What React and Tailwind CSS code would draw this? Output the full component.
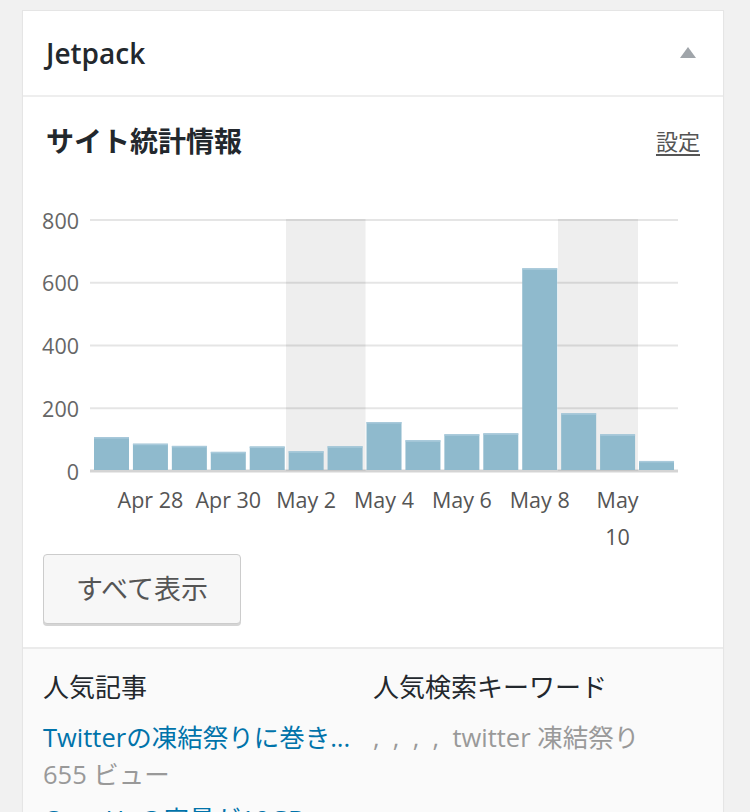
const bars = [108, 87, 80, 61, 78, 63, 79, 156, 98, 117, 120, 646, 184, 117, 32];
const xLabels = [
  { i: 1, t: "Apr 28" },
  { i: 3, t: "Apr 30" },
  { i: 5, t: "May 2" },
  { i: 7, t: "May 4" },
  { i: 9, t: "May 6" },
  { i: 11, t: "May 8" },
];
const yTicks = [0, 200, 400, 600, 800];

function Chart() {
  const zero = 472;
  const unit = 62.75 / 200;
  const step = 38.93;
  const x0 = 94;
  return (
    <svg width="700" height="350" viewBox="23 200 700 350" className="block">
      {/* weekend shading */}
      <rect x="286" y="220" width="79.5" height="252" fill="#eeeeee" />
      <rect x="558" y="220" width="80" height="252" fill="#eeeeee" />
      {yTicks.map((v) => {
        const y = zero - v * unit;
        return (
          <g key={v}>
            <line
              x1="90"
              x2="678"
              y1={y}
              y2={y}
              stroke={v === 0 ? "rgba(0,0,0,0.17)" : "rgba(0,0,0,0.1)"}
              strokeWidth={v === 0 ? 3 : 2}
            />
            <text x="79" y={y} textAnchor="end" dominantBaseline="central" fontSize="21.5" fill="#666">
              {v}
            </text>
          </g>
        );
      })}
      {bars.map((v, i) => {
        const h = v * unit;
        const x = x0 + i * step;
        return (
          <g key={i}>
            <rect x={x} y={zero - h} width="35" height={h - 1} fill="#8fbacd" />
            <rect x={x} y={zero - h} width="35" height="1.5" fill="#a9cadb" />
          </g>
        );
      })}
      {xLabels.map((l) => (
        <text
          key={l.t}
          x={x0 + l.i * step + 17.5}
          y="500"
          textAnchor="middle"
          dominantBaseline="central"
          fontSize="21.5"
          fill="#555"
        >
          {l.t}
        </text>
      ))}
      <text x={x0 + 13 * step + 17.5} y="500" textAnchor="middle" dominantBaseline="central" fontSize="21.5" fill="#555">
        May
      </text>
      <text x={x0 + 13 * step + 17.5} y="537" textAnchor="middle" dominantBaseline="central" fontSize="21.5" fill="#555">
        10
      </text>
    </svg>
  );
}

export default function App() {
  return (
    <div
      className="min-h-screen h-[812px] overflow-hidden bg-[#f1f1f1] pt-[10px]"
      style={{ fontFamily: '"Open Sans", "Noto Sans CJK JP", sans-serif' }}
    >
      <div className="ml-[22px] w-[702px] bg-white border border-[#e5e5e5] shadow-[0_1px_1px_rgba(0,0,0,0.04)]">
        {/* header */}
        <div className="flex items-center justify-between h-[86px] pl-[23px] pr-[27px] border-b-2 border-[#eeeeee]">
          <h2 className="text-[28px] font-semibold text-[#23282d]">Jetpack</h2>
          <svg width="16" height="11" viewBox="0 0 16 11" className="mb-[1px]">
            <polygon points="8,0 16,11 0,11" fill="#a0a5aa" />
          </svg>
        </div>

        {/* stats */}
        <div className="pt-[26px] pb-[23px]">
          <div className="flex items-center justify-between pl-[23px] pr-[23px] h-[36px]">
            <h3 className="text-[28px] font-bold text-[#23282d] leading-[36px]">サイト統計情報</h3>
            <a href="#" className="text-[22px] text-[#555] underline underline-offset-4">
              設定
            </a>
          </div>
          <div className="mt-[40px]">
            <Chart />
          </div>
          <button className="ml-[20px] mt-[5px] w-[198px] h-[70px] rounded-[4px] border border-[#cccccc] bg-[#f7f7f7] shadow-[0_2px_0_#d5d5d5] text-[27px] text-[#555]">
            すべて表示
          </button>
        </div>

        {/* footer */}
        <div className="border-t-2 border-[#ebebeb] bg-[#fafafa] pt-[20px] pl-[20px] h-[200px]">
          <div className="grid grid-cols-[330px_1fr]">
            <div>
              <h4 className="text-[26px] leading-[36px] text-[#23282d]">人気記事</h4>
              <div className="mt-[14px]">
                <a href="#" className="block whitespace-nowrap text-[25.5px] leading-[37px] text-[#0073aa]">
                  Twitterの凍結祭りに巻き...
                </a>
                <div className="text-[25.5px] leading-[37px] text-[#999]">655 ビュー</div>
                <a href="#" className="block mt-[8px] whitespace-nowrap text-[25.5px] leading-[37px] text-[#0073aa]">
                  ConoHaの容量が10GB...
                </a>
              </div>
            </div>
            <div>
              <h4 className="text-[26px] leading-[36px] text-[#23282d]">人気検索キーワード</h4>
              <div className="mt-[14px] text-[25.5px] leading-[37px] text-[#999] whitespace-nowrap">
                ,&nbsp; ,&nbsp; ,&nbsp; ,&nbsp; twitter 凍結祭り
              </div>
            </div>
          </div>
        </div>
      </div>
    </div>
  );
}
